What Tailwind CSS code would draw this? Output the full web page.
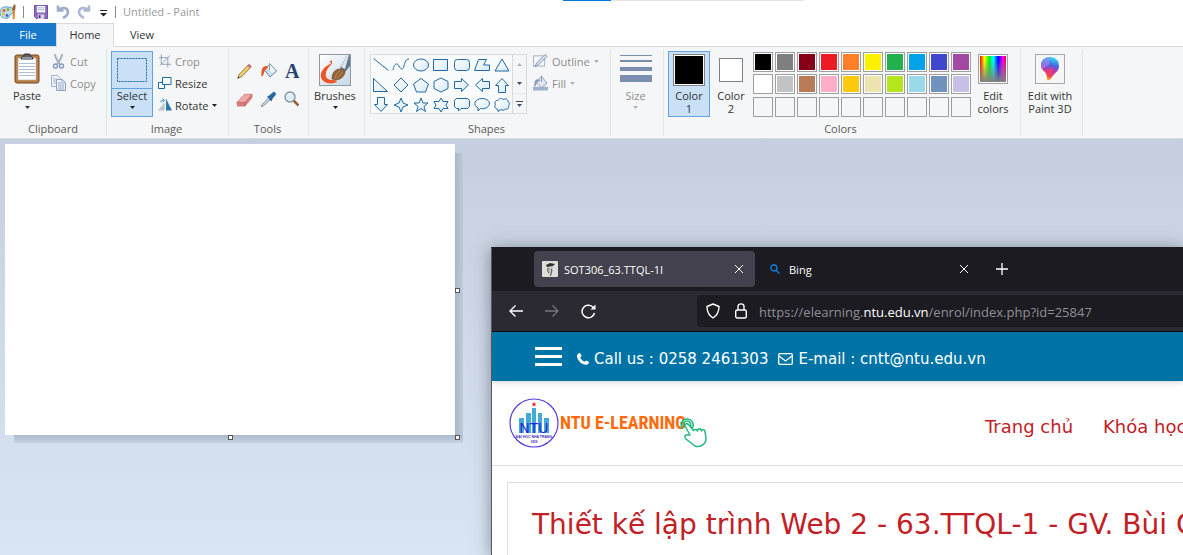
<!DOCTYPE html>
<html lang="en">
<head>
<meta charset="utf-8">
<title>Untitled - Paint</title>
<script src="https://cdn.jsdelivr.net/npm/@tailwindcss/browser@4"></script>
</head>
<body class="h-screen overflow-hidden flex flex-col bg-white font-['Open_Sans',sans-serif] text-[11px] leading-[13px] text-[#333]">

<svg class="absolute size-0">
  <defs>
    <linearGradient id="shade" x1="0" y1="0" x2="1" y2="1"><stop offset="0" stop-color="#fff"/><stop offset="1" stop-color="#d6eaf5"/></linearGradient>
    <linearGradient id="hue"><stop offset="0" stop-color="#f00"/><stop offset=".17" stop-color="#ff0"/><stop offset=".36" stop-color="#0e2"/><stop offset=".52" stop-color="#0ff"/><stop offset=".7" stop-color="#00f"/><stop offset=".88" stop-color="#f0f"/><stop offset="1" stop-color="#f02"/></linearGradient>
    <linearGradient id="fadeGray" x1="0" y1="0" x2="0" y2="1"><stop offset=".15" stop-color="#808080" stop-opacity="0"/><stop offset="1" stop-color="#808080"/></linearGradient>
    <linearGradient id="pin" x1=".6" y1="0" x2=".4" y2="1"><stop offset="0" stop-color="#2ce0f4"/><stop offset=".35" stop-color="#4b62e0"/><stop offset=".6" stop-color="#c336a8"/><stop offset=".8" stop-color="#f04848"/><stop offset="1" stop-color="#ffb81c"/></linearGradient>
    <linearGradient id="photo" x1="0" y1="0" x2="1" y2="1"><stop offset="0" stop-color="#fff"/><stop offset="1" stop-color="#c5d6e6"/></linearGradient>
  </defs>
</svg>

<!-- Title bar -->
<header class="h-[23px] shrink-0 flex items-center">
  <svg class="w-4 h-4" viewBox="0 0 16 16"><path d="M8 3C3 2-1 5 0 10c1 4 5 5 8 4 2-1 1-3 3-4s4-1 3-4c-1-2-3-3-6-3z" fill="#b9dcf0" stroke="#5d9cc4"/><circle cx="4" cy="6.500" r="1.500" fill="#ef5b2f"/><circle cx="8" cy="5.500" r="1.500" fill="#7cb82f"/><circle cx="3.500" cy="10" r="1.500" fill="#f5c22b"/><circle cx="7" cy="11.500" r="1.400" fill="#3a6fc4"/><path d="M12.500 6.500h2.500l-.3 8-1 1-1-1z" fill="#e8872d"/><path d="M12 6.500 13 2l2-2 .6 2-.4 4.500z" fill="#a2622d"/></svg>
  <span class="w-px h-3 bg-[#8a8a8a] ml-[7px]"></span>
  <button aria-label="Save" class="ml-[10px]"><svg class="w-[14px] h-[14px]" viewBox="0 0 15 15"><path d="M.5.5h14v14H2.500l-2-2z" fill="#8b6bb5" stroke="#65469a"/><path d="M3 1h9v7H3z" fill="#eef4fb"/><path d="M4 3h7M4 5h7" stroke="#a9bfd6"/><path d="M4 10h7v5H4z" fill="#d9cdea"/><path d="M5 11h2v3H5z" fill="#4b3182"/></svg></button>
  <button aria-label="Undo" class="ml-2"><svg class="w-[14px] h-[15px]" viewBox="0 0 14 15"><path d="M2 1.500v5h5.500M2.500 6C5 3 12 3 12 8c0 3-2 4.500-5 6" fill="none" stroke="#9aacca" stroke-width="2.600"/></svg></button>
  <button aria-label="Redo" class="ml-[7px]"><svg class="w-[14px] h-[15px] -scale-x-100" viewBox="0 0 14 15"><path d="M2 1.500v5h5.500M2.500 6C5 3 12 3 12 8c0 3-2 4.500-5 6" fill="none" stroke="#abbad2" stroke-width="2.600"/></svg></button>
  <button aria-label="Customize Quick Access Toolbar" class="ml-[9px] mt-1"><svg class="w-[7px] h-[7px]" viewBox="0 0 7 7"><path d="M0 .5h7" stroke="#222"/><path d="M0 3h7L3.500 6.500z" fill="#222"/></svg></button>
  <span class="w-px h-3 bg-[#8a8a8a] ml-2"></span>
  <h1 class="ml-[7px] text-[#9a9a9a]">Untitled - Paint</h1>
  <div class="ml-[363px] w-[241px] h-px self-start bg-[#e5e5e5]"><div class="w-12 h-px bg-[#0078d7]"></div></div>
</header>

<!-- Ribbon tabs -->
<nav class="h-[23px] shrink-0 flex relative z-10">
  <button class="w-14 bg-[#1979ca] text-white">File</button>
  <button class="w-[58px] h-6 pb-0.5 bg-[#f5f6f7] border border-b-0 border-[#dadbdc] text-[#333]">Home</button>
  <button class="w-14 text-[#333]">View</button>
</nav>

<!-- Ribbon -->
<section class="h-[93px] shrink-0 flex bg-[#f5f6f7] border-y border-[#dadbdc] py-0.5 overflow-hidden text-center">

  <div class="w-[107px] shrink-0 border-r border-[#e2e3e4] flex flex-col justify-between pb-px">
    <div class="flex pt-0.5">
      <button class="w-[42px] ml-1.5 flex flex-col items-center">
        <svg class="w-[26px] h-[34px]" viewBox="0 0 26 34"><rect x="1" y="4" width="24" height="28" rx="2" fill="#b98045" stroke="#74471c"/><path d="M4 7h18v22H4z" fill="#fff" stroke="#a5acb4" stroke-width=".6"/><path d="M5 12.500h16M5 15.500h16M5 18.500h16M5 21.500h16M5 24.500h16" stroke="#a9c0d8"/><path d="M7 8c0-3 3-2 3.500-5h5c.5 3 3.500 2 3.500 5z" fill="#555d66" stroke="#333"/><path d="M8 7h10" stroke="#d4dae0"/></svg>
        <span class="mt-1">Paste</span>
        <svg class="w-[5px] h-[3px] mt-1" viewBox="0 0 5 3"><path d="M0 0h5L2.500 3z" fill="#333"/></svg>
      </button>
      <div class="flex flex-col ml-[3px] -mt-px text-[#8d8d8d]">
        <button class="h-[22px] flex items-center gap-1"><svg class="w-[15px] h-4" viewBox="0 0 15 16" fill="none"><path d="M4 1c0 4 2 6 5 10M11 1c0 4-2 6-5 10" stroke="#a9b2c3" stroke-width="2"/><circle cx="4.500" cy="13" r="2" stroke="#8299bd" stroke-width="1.400"/><circle cx="10.500" cy="13" r="2" stroke="#8299bd" stroke-width="1.400"/></svg>Cut</button>
        <button class="h-[22px] flex items-center gap-1"><svg class="w-[15px] h-4" viewBox="0 0 15 16"><path d="M.5.500h6l3 3v8h-9z" fill="#eef2f8" stroke="#a3b2cb"/><path d="M2 4h4M2 6h5M2 8h5" stroke="#a9b8d0"/><path d="M5.500 4.500h6l3 3v8h-9z" fill="#eef2f8" stroke="#8ea1c0"/><path d="M11 4.500v3.500h3.500M7 8h3M7 10h6M7 12h6M7 14h6" stroke="#9aaeca" fill="none"/></svg>Copy</button>
      </div>
    </div>
    <span class="text-[#5a5a5a]">Clipboard</span>
  </div>

  <div class="w-[122px] shrink-0 border-r border-[#e2e3e4] flex flex-col justify-between pb-px">
    <div class="flex pt-0.5">
      <button class="w-[42px] h-[66px] ml-1 bg-[#c9e0f7] border border-[#62a2e4] flex flex-col items-center">
        <span class="w-full h-[37px] border-b border-[#62a2e4] flex items-center justify-center"><svg class="w-[30px] h-6" viewBox="0 0 30 24"><rect x=".5" y=".5" width="29" height="23" fill="none" stroke="#1b68a6" stroke-dasharray="2 1"/></svg></span>
        <span>Select</span>
        <svg class="w-[5px] h-[3px] mt-1" viewBox="0 0 5 3"><path d="M0 0h5L2.500 3z" fill="#222"/></svg>
      </button>
      <div class="flex flex-col ml-[5px] -mt-px">
        <button class="h-[22px] flex items-center gap-[3px] text-[#8d8d8d]"><svg class="w-[14px] h-[14px]" viewBox="0 0 15 14" fill="none" stroke="#8c9cb8"><path d="M3.500 0v10.500H14M1 3.500h9.500V14M2 12 13 1" /></svg>Crop</button>
        <button class="h-[22px] flex items-center gap-[3px]"><svg class="w-[14px] h-[14px]" viewBox="0 0 14 14"><path d="M.5 6.500h6v6h-6z" fill="#fff" stroke="#1b68a6"/><path d="M4.500 1.500h8.500v7H4.500z" fill="#fff" stroke="#1b68a6"/></svg>Resize</button>
        <button class="h-[22px] flex items-center gap-[3px]"><svg class="w-[14px] h-[14px]" viewBox="0 0 15 14"><path d="M7 4v9H0z" fill="#bcc5cf"/><path d="M8.500 0v13H15z" fill="#2c79ae"/><path d="M3 4c0-2 1-2 3-2M5 0l2 2-2 2" fill="none" stroke="#2382cf"/></svg>Rotate<svg class="w-[5px] h-[3px]" viewBox="0 0 5 3"><path d="M0 0h5L2.500 3z" fill="#222"/></svg></button>
      </div>
    </div>
    <span class="text-[#5a5a5a] pr-0.5">Image</span>
  </div>

  <div class="w-20 shrink-0 border-r border-[#e2e3e4] flex flex-col justify-between pb-px">
    <div class="grid grid-cols-3 gap-x-1.5 gap-y-[10px] px-[7px] pt-[13px]">
      <button aria-label="Pencil"><svg class="w-[17px] h-[17px]" viewBox="0 0 18 18"><path d="m2 16 1.500-4 9-9.500L15 5l-9 9.500z" fill="#f4d06c" stroke="#6b5838" stroke-width=".8"/><path d="m12.500 2.500 1.500-1.300L16.300 4 15 5z" fill="#e66b7d" stroke="#a34a52" stroke-width=".6"/><path d="m1.500 16.500.8-2 1.200 1.200z" fill="#222"/></svg></button>
      <button aria-label="Fill with color"><svg class="w-[18px] h-[18px]" viewBox="0 0 18 18"><path d="m4.500 8 5.500-6 6.500 7-6.500 6z" fill="#c8e0f1" stroke="#5e87aa"/><path d="m10 2.500 5.500 6.300-3 2.700-5-6z" fill="#eef7fc"/><path d="M9.500 1v7" stroke="#8f9da9"/><path d="M7 4C3 4 1 6 1.500 14.500 4 14 4 10 5 8l3-2.500z" fill="#ed5526"/></svg></button>
      <button aria-label="Text" class="font-['Liberation_Serif',serif] font-bold text-[20px] leading-[18px] text-[#24446f] h-[18px]">A</button>
      <button aria-label="Eraser"><svg class="w-[17px] h-[17px]" viewBox="0 0 18 18"><path d="m1 12 8-8.500h8l-7.500 9z" fill="#f4a8a8" stroke="#c56c6c" stroke-width=".7"/><path d="M1 12h8.500v4H1.500zM9.500 12 17 3.500V7l-7.500 9z" fill="#dc7c7c" stroke="#bd6464" stroke-width=".6"/></svg></button>
      <button aria-label="Color picker"><svg class="w-[17px] h-[17px]" viewBox="0 0 18 18"><path d="m1.500 16.500 1-2.500L9.500 7l1.500 2-7 6.500z" fill="#cfdfea" stroke="#5f7081" stroke-width=".8"/><path d="m8 6 2-1 4-3.500c1-1 3 1 2.500 2.200L13 8l-1 2.500z" fill="#2767ab" stroke="#164c88" stroke-width=".7"/></svg></button>
      <button aria-label="Magnifier"><svg class="w-[18px] h-[18px]" viewBox="0 0 18 18"><path d="m10.500 10.500 5 5" stroke="#9a6432" stroke-width="2.500"/><circle cx="7" cy="7" r="5" fill="#dcf0fb" stroke="#8b939c" stroke-width="1.400"/><path d="M5 6c.5-1.500 2-2 3-2" stroke="#fff" fill="none"/></svg></button>
    </div>
    <span class="text-[#5a5a5a] pr-0.5">Tools</span>
  </div>

  <div class="w-14 shrink-0 border-r border-[#e2e3e4]">
    <button class="w-full flex flex-col items-center pt-[5px] pr-[3px]">
      <svg class="w-8 h-8" viewBox="0 0 32 32"><rect x=".5" y=".5" width="31" height="31" fill="url(#photo)" stroke="#909aa4"/><path d="M11 10C5 13 1 18 2 23c1 6 10 8 16 5-1-2-3-2-5-2-5 0-7-3-6-7 .5-4 4-7 6-9.500C14 7 12 5 10.500 8l1 .5c1-1 1.500 0-.5 1.500z" fill="#ed5526"/><path d="m21 14 7-12 3-1v11l-5 6z" fill="#63758b"/><path d="m22 13 6-11 2-1-4 14z" fill="#dce5ed"/><path d="M13 25c0-6 3-10 8-10 5 0 6 3 4 6-2 4-7 6-12 4z" fill="#95633b" stroke="#69401f" stroke-width=".6"/><path d="M16 24c1-4 2-5 5-7M18 24c2-2 4-3 5-6" stroke="#bf8c57" fill="none"/></svg>
      <span class="mt-[3px]">Brushes</span>
      <svg class="w-[5px] h-[3px] mt-1" viewBox="0 0 5 3"><path d="M0 0h5L2.500 3z" fill="#222"/></svg>
    </button>
  </div>

  <div class="w-[246px] shrink-0 border-r border-[#e2e3e4] flex flex-col justify-between pb-px">
    <div class="flex pt-[5px] pl-[5px]">
      <div class="w-[157px] h-[60px] border border-[#d9dadb] bg-[#fafbfc] flex">
        <div class="grid grid-cols-7 w-[141px] [&_svg]:size-[18px] [&_svg]:m-px [&_svg]:fill-[url(#shade)] [&_svg]:stroke-[#1e69a5]">
          <button aria-label="Line"><svg viewBox="0 0 18 18"><path d="m1.500 2.500 15 12"/></svg></button>
          <button aria-label="Curve"><svg viewBox="0 0 18 18"><path style="fill:none" d="M1 14c1-6 4-8 6-4s4 4 5 0 2-7 5-7"/></svg></button>
          <button aria-label="Oval"><svg viewBox="0 0 18 18"><ellipse cx="9" cy="9" rx="7.500" ry="6"/></svg></button>
          <button aria-label="Rectangle"><svg viewBox="0 0 18 18"><path d="M1.500 3.500h14v11h-14z"/></svg></button>
          <button aria-label="Rounded rectangle"><svg viewBox="0 0 18 18"><rect x="1.500" y="3.500" width="15" height="11" rx="3"/></svg></button>
          <button aria-label="Polygon"><svg viewBox="0 0 18 18"><path d="M5.500 3.500h8l-3 5.500h6v5.500h-15z"/></svg></button>
          <button aria-label="Triangle"><svg viewBox="0 0 18 18"><path d="m9 3 7 12H2z"/></svg></button>
          <button aria-label="Right triangle"><svg viewBox="0 0 18 18"><path d="M1.500 2.500v13h14z"/></svg></button>
          <button aria-label="Diamond"><svg viewBox="0 0 18 18"><path d="m9 2 7 7-7 7-7-7z"/></svg></button>
          <button aria-label="Pentagon"><svg viewBox="0 0 18 18"><path d="m9 2.500 7.500 5.500-3 8h-9l-3-8z"/></svg></button>
          <button aria-label="Hexagon"><svg viewBox="0 0 18 18"><path d="m9 2 7 3.500v7L9 16l-7-3.500v-7z"/></svg></button>
          <button aria-label="Right arrow"><svg viewBox="0 0 18 18"><path d="M1.500 5.500h7v-3L15.500 9l-7 6.500v-3h-7z"/></svg></button>
          <button aria-label="Left arrow"><svg viewBox="0 0 18 18"><path d="M16.500 5.500h-7v-3L2.500 9l7 6.500v-3h7z"/></svg></button>
          <button aria-label="Up arrow"><svg viewBox="0 0 18 18"><path d="M5.500 16.500v-7h-3L9 2.500l6.500 7h-3v7z"/></svg></button>
          <button aria-label="Down arrow"><svg viewBox="0 0 18 18"><path d="M5.500 1.500v7h-3L9 15.500l6.500-7h-3v-7z"/></svg></button>
          <button aria-label="Four-point star"><svg viewBox="0 0 18 18"><path d="m9 2 2 5 5 2-5 2-2 5-2-5-5-2 5-2z"/></svg></button>
          <button aria-label="Five-point star"><svg viewBox="0 0 18 18"><path d="m9 2 2 5h5l-4 3.500 1.500 5L9 12.500l-4.500 3 1.500-5L2 7h5z"/></svg></button>
          <button aria-label="Six-point star"><svg viewBox="0 0 18 18"><path d="m9 2 2 3.500h5L14 9l2 3.500h-5L9 16l-2-3.500H2L4 9 2 5.500h5z"/></svg></button>
          <button aria-label="Rounded callout"><svg viewBox="0 0 18 18"><path d="M3.500 2.500h11l2 2v6l-2 2H8L5.500 15v-2.500h-2l-2-2v-6z"/></svg></button>
          <button aria-label="Oval callout"><svg viewBox="0 0 18 18"><path d="M5 12C-1 9 2 2.500 9 2.500S19 8 14 11.500c-2 1.500-5 1.300-6.500 1L5 15z"/></svg></button>
          <button aria-label="Cloud callout"><svg viewBox="0 0 18 18"><path d="M4.500 13C2 13 1 10 2.500 9 1 6 3 4 5 4.500 6 2 9 2 10 3.500c3-1.500 5 0 5 2 2 1 2 3 .5 4 1 3-1 4-3 3.500-2 2-3 1-4.500.500L5 15.500z"/></svg></button>
        </div>
        <div class="flex flex-col flex-1 border-l border-[#d9dadb] bg-[#f5f6f7]">
          <button aria-label="Scroll shapes up" class="flex-1 flex items-center justify-center"><svg class="w-[5px] h-[3px]" viewBox="0 0 5 3"><path d="M0 3h5L2.500 0z" fill="#b0b4ba"/></svg></button>
          <button aria-label="Scroll shapes down" class="flex-1 flex items-center justify-center"><svg class="w-[5px] h-[3px]" viewBox="0 0 5 3"><path d="M0 0h5L2.500 3z" fill="#3c4a66"/></svg></button>
          <button aria-label="More shapes" class="flex-1 flex items-center justify-center border-t border-[#e7e8e9]"><svg class="w-[7px] h-[6px]" viewBox="0 0 7 6"><path d="M0 .5h7" stroke="#3c4a66"/><path d="M1 3h5L3.500 6z" fill="#3c4a66"/></svg></button>
        </div>
      </div>
      <div class="flex flex-col ml-1.5 -mt-1 text-[#8d8d8d]">
        <button class="h-[22px] flex items-center gap-1"><svg class="w-[15px] h-4" viewBox="0 0 16 16"><path d="M.5 2.500h12v11H.5z" fill="#f4f7fa" stroke="#a3adbf"/><path d="m2 14 2-4 9-9 2 2-9 9z" fill="#d8dfec" stroke="#8392b0"/></svg>Outline<svg class="w-[5px] h-[3px]" viewBox="0 0 5 3"><path d="M0 0h5L2.500 3z" fill="#aeb0b4"/></svg></button>
        <button class="h-[22px] flex items-center gap-1"><svg class="w-[15px] h-4" viewBox="0 0 16 16"><path d="M0 12h16v4H0z" fill="#a1b0cc"/><path d="m3 7 6-6 6 7-6 5z" fill="#dfe6f1" stroke="#8c9dbb"/><path d="M5 4C2 4 1 7 1.500 12 4 11 3.500 8 5 7l3-2z" fill="#8b9cbc"/><path d="M9 0v7" stroke="#8c9dbb"/></svg>Fill<svg class="w-[5px] h-[3px]" viewBox="0 0 5 3"><path d="M0 0h5L2.500 3z" fill="#aeb0b4"/></svg></button>
      </div>
    </div>
    <span class="text-[#5a5a5a] pr-0.5">Shapes</span>
  </div>

  <div class="w-[53px] shrink-0 border-r border-[#e2e3e4]">
    <button class="w-full flex flex-col items-center pt-[5px] pr-[3px] text-[#8d8d8d]">
      <svg class="w-8 h-[31px]" viewBox="0 0 32 31" fill="#7b8eb0"><path d="M0 1h32v1H0zM0 6h32v2H0zM0 13h32v4H0zM0 21h32v7H0z"/></svg>
      <span class="mt-1">Size</span>
      <svg class="w-[5px] h-[3px] mt-1" viewBox="0 0 5 3"><path d="M0 0h5L2.500 3z" fill="#aeb0b4"/></svg>
    </button>
  </div>

  <div class="w-[357px] shrink-0 border-r border-[#e2e3e4] flex flex-col justify-between pb-px">
    <div class="flex pt-0.5">
      <button class="w-[42px] h-[66px] ml-1 bg-[#c9e0f7] border border-[#62a2e4] flex flex-col items-center pt-0.5">
        <span class="size-8 border border-[#808080] bg-white p-px"><span class="block size-full bg-black"></span></span>
        <span class="mt-[3px]">Color<br>1</span>
      </button>
      <button class="w-[42px] h-[66px] flex flex-col items-center pt-[7px]">
        <span class="size-6 border border-[#808080] bg-white"></span>
        <span class="mt-[7px]">Color<br>2</span>
      </button>
      <div class="grid grid-cols-10 gap-0.5 ml-px mt-px [&>button]:size-5 [&>button]:border [&>button]:border-[#a0a0a0] [&>button]:p-px [&_span]:block [&_span]:size-full">
        <button aria-label="Black" class="bg-white"><span class="bg-black"></span></button>
        <button aria-label="Gray" class="bg-white"><span class="bg-[#7f7f7f]"></span></button>
        <button aria-label="Dark red" class="bg-white"><span class="bg-[#880015]"></span></button>
        <button aria-label="Red" class="bg-white"><span class="bg-[#ed1c24]"></span></button>
        <button aria-label="Orange" class="bg-white"><span class="bg-[#ff7f27]"></span></button>
        <button aria-label="Yellow" class="bg-white"><span class="bg-[#fff200]"></span></button>
        <button aria-label="Green" class="bg-white"><span class="bg-[#22b14c]"></span></button>
        <button aria-label="Turquoise" class="bg-white"><span class="bg-[#00a2e8]"></span></button>
        <button aria-label="Indigo" class="bg-white"><span class="bg-[#3f48cc]"></span></button>
        <button aria-label="Purple" class="bg-white"><span class="bg-[#a349a4]"></span></button>
        <button aria-label="White" class="bg-white"><span class="bg-white"></span></button>
        <button aria-label="Light gray" class="bg-white"><span class="bg-[#c3c3c3]"></span></button>
        <button aria-label="Brown" class="bg-white"><span class="bg-[#b97a57]"></span></button>
        <button aria-label="Rose" class="bg-white"><span class="bg-[#ffaec9]"></span></button>
        <button aria-label="Gold" class="bg-white"><span class="bg-[#ffc90e]"></span></button>
        <button aria-label="Light yellow" class="bg-white"><span class="bg-[#efe4b0]"></span></button>
        <button aria-label="Lime" class="bg-white"><span class="bg-[#b5e61d]"></span></button>
        <button aria-label="Light turquoise" class="bg-white"><span class="bg-[#99d9ea]"></span></button>
        <button aria-label="Blue-gray" class="bg-white"><span class="bg-[#7092be]"></span></button>
        <button aria-label="Lavender" class="bg-white"><span class="bg-[#c8bfe7]"></span></button>
        <button aria-label="Custom color 1"></button>
        <button aria-label="Custom color 2"></button>
        <button aria-label="Custom color 3"></button>
        <button aria-label="Custom color 4"></button>
        <button aria-label="Custom color 5"></button>
        <button aria-label="Custom color 6"></button>
        <button aria-label="Custom color 7"></button>
        <button aria-label="Custom color 8"></button>
        <button aria-label="Custom color 9"></button>
        <button aria-label="Custom color 10"></button>
      </div>
      <button class="w-[42px] h-[66px] ml-px flex flex-col items-center pt-[3px]">
        <svg class="w-[30px] h-[31px]" viewBox="0 0 30 31"><rect x=".5" y=".5" width="29" height="29" fill="#fff" stroke="#a0a0a0"/><path d="M2 2h26v26H2z" fill="url(#hue)"/><path d="M2 2h26v26H2z" fill="url(#fadeGray)"/></svg>
        <span class="mt-1">Edit<br>colors</span>
      </button>
    </div>
    <span class="text-[#5a5a5a] pr-[3px]">Colors</span>
  </div>

  <div class="w-[62px] shrink-0 border-r border-[#e2e3e4]">
    <button class="w-full flex flex-col items-center pt-[5px] pr-[3px]">
      <svg class="w-[30px] h-[31px]" viewBox="0 0 30 31"><rect x=".5" y=".5" width="29" height="29" fill="#f6f6f6" stroke="#a9a9a9"/><path d="M15 3c6 0 9 4 9 9 0 6-5 7-7 11-1 2-3 4-5 3 0-3 0-5-2-8-2-2-4-3-4-7 0-5 4-8 9-8z" fill="url(#pin)"/><path d="M7 8c2-4 5-5 8-5l-1 8-7 4c-1-2-1-5 0-7z" fill="#a98bf0" fill-opacity=".6"/><path d="M9 17c3-3 7-1 9-4 1 3-1 7-4 11-1-3-3-5-5-7z" fill="#ec3d6b" fill-opacity=".8"/></svg>
      <span class="mt-1">Edit with<br>Paint 3D</span>
    </button>
  </div>
</section>

<!-- Drawing area -->
<main class="flex-1 min-h-0 relative overflow-hidden bg-linear-to-b from-[#c5cfdf] to-[#dae5f3]">
  <div class="absolute left-[14px] top-[296px] w-[449px] h-2 bg-linear-to-b from-[#aab9cd] to-[#c5d2e2]"></div>
  <div class="absolute left-[455px] top-[14px] w-2 h-[282px] bg-linear-to-r from-[#a9b6ca] to-[#bfcbdc]"></div>
  <div class="absolute left-[5px] top-[5px] w-[450px] h-[291px] bg-white"></div>
  <span class="absolute left-[455px] top-[149px] size-[5px] border border-[#555] bg-white"></span>
  <span class="absolute left-[455px] top-[296px] size-[5px] border border-[#555] bg-white"></span>
  <span class="absolute left-[228px] top-[296px] size-[5px] border border-[#555] bg-white"></span>

  <!-- Browser window -->
  <div class="absolute left-[491px] top-[108px] right-0 bottom-0 border-l border-t border-l-[#55595f] border-t-[#1c1b22] bg-white shadow-[0_2px_16px_rgba(40,50,65,0.5)] flex flex-col">
    <div class="h-[43px] shrink-0 bg-[#1c1b22] flex pt-[3px] pl-[42px] text-white">
      <div class="w-[221px] h-9 rounded bg-[#42414d] flex items-center px-2">
        <svg class="size-4" viewBox="0 0 16 16"><rect width="16" height="16" rx="1" fill="#deded9"/><path d="m4 4 4-2 5 1-2 2-6 1z" fill="#333"/><path d="M5 6c0 5 1 6 4 9l2-9" fill="#c4c4bf"/><path d="M6 7v4l1 1M9 8l1 1-1.500 6" stroke="#555" fill="none"/></svg>
        <span class="ml-1.5">SOT306_63.TTQL-1I</span>
        <button aria-label="Close tab" class="ml-auto mr-1"><svg class="size-2" viewBox="0 0 8 8"><path d="m0 0 8 8M8 0 0 8" stroke="#fff"/></svg></button>
      </div>
      <div class="w-[221px] h-9 ml-1 flex items-center pl-[11px] pr-3">
        <svg class="size-[10px]" viewBox="0 0 9 9" fill="none" stroke="#1275c9" stroke-width="1.400"><circle cx="3.500" cy="3.500" r="2.700"/><path d="m5.500 5.500 3 3"/></svg>
        <span class="ml-[9px]">Bing</span>
        <button aria-label="Close tab" class="ml-auto"><svg class="size-2" viewBox="0 0 8 8"><path d="m0 0 8 8M8 0 0 8" stroke="#fff"/></svg></button>
      </div>
      <button aria-label="New tab" class="ml-4 h-9"><svg class="size-3" viewBox="0 0 12 12"><path d="M6 0v12M0 6h12" stroke="#fff" stroke-width="1.300"/></svg></button>
    </div>
    <div class="h-[41px] shrink-0 bg-[#2b2a33] border-b border-[#0c0c0d] flex items-center pl-[17px]">
      <button aria-label="Back"><svg class="size-[14px]" viewBox="0 0 14 14" fill="none" stroke="#fff" stroke-width="1.400"><path d="M14 7H1M6.500 1.500 1 7l5.500 5.500"/></svg></button>
      <button aria-label="Forward" class="ml-[22px]"><svg class="size-[14px]" viewBox="0 0 14 14" fill="none" stroke="#76757d" stroke-width="1.300"><path d="M0 7h13M7.500 1.500 13 7l-5.500 5.500"/></svg></button>
      <button aria-label="Reload" class="ml-[22px]"><svg class="size-[15px]" viewBox="0 0 15 15" fill="none" stroke="#fff" stroke-width="1.500"><path d="M13.500 9A6.300 6.300 0 1 1 11.500 2.700L13 4"/><path d="M14.500.500v5h-5z" fill="#fff" stroke="none"/></svg></button>
      <div class="ml-[101px] flex-1 h-8 rounded-l bg-[#1c1b22] flex items-center pl-[9px]">
        <svg class="w-[14px] h-4" viewBox="0 0 14 16" fill="none" stroke="#fff" stroke-width="1.400"><path d="m7 1 6 2.500c0 6-2 9-6 11.500C3 12.500 1 9.500 1 3.500z" stroke-linejoin="round"/></svg>
        <svg class="w-3 h-4 ml-[15px]" viewBox="0 0 12 16" fill="none" stroke="#fff" stroke-width="1.400"><rect x=".7" y="7" width="10.600" height="8" rx="1.500"/><path d="M3 7V3.500C3 0 9 0 9 3.500V7"/></svg>
        <p class="ml-3 pt-px text-[13px] leading-5 text-[#8f8f96] whitespace-nowrap">https://elearning.<span class="text-white">ntu.edu.vn</span>/enrol/index.php?id=25847</p>
      </div>
    </div>

    <div class="font-['DejaVu_Sans',sans-serif] flex-1 min-h-0 overflow-hidden">
      <div class="h-[49px] bg-[#0073a6] flex items-center pl-[43px] pt-1 text-white text-[15px] leading-5 whitespace-nowrap relative shadow-[0_2px_5px_rgba(0,0,0,0.15)]">
        <button aria-label="Menu" class="mb-1"><svg class="w-[27px] h-[19px]" viewBox="0 0 27 19" fill="#fff"><path d="M0 0h27v3H0zM0 8h27v3H0zM0 16h27v3H0z"/></svg></button>
        <svg class="size-3 ml-[15px]" viewBox="0 0 12 12" fill="#fff"><path d="m0 2 2-2 1.300.2L4.600 3 3.200 4.500c.8 1.800 2.400 3.400 4.300 4.300L9 7.400l2.800 1.400.2 1.300-2 1.700C5 12.500-.5 7 0 2z"/></svg>
        <span class="ml-[5px]">Call us : 0258 2461303</span>
        <svg class="w-[15px] h-3 ml-[10px]" viewBox="0 0 15 12" fill="none" stroke="#fff" stroke-width="1.300"><rect x=".7" y=".7" width="13.600" height="10.600" rx="1"/><path d="m1 3 6.500 5L14 3"/></svg>
        <span class="ml-[5px]">E-mail : cntt@ntu.edu.vn</span>
      </div>
      <div class="h-[85px] border-b border-[#dfdfdf] flex items-center pl-[17px] whitespace-nowrap">
        <svg class="size-[50px]" viewBox="0 0 50 50"><circle cx="25" cy="25" r="24" fill="#fff" stroke="#5a3ade" stroke-width="1.200"/><path d="M10 20h5v15h-5zM17 15h5v20h-5zM23 10h4v25h-4zM29 15h4v20h-4zM35 20h5v15h-5z" fill="#43abd8"/><path d="m25 4 .7 1.600h1.700l-1.300 1.100.5 1.700-1.600-1-1.600 1 .5-1.700-1.300-1.100h1.700z" fill="#e02424"/><text x="25" y="35" text-anchor="middle" font-family="Liberation Sans" font-size="14" fill="#2a1edb">NTU</text><text x="25" y="40" text-anchor="middle" font-family="Liberation Sans" font-weight="bold" font-size="3.500" fill="#3a2abf">ĐẠI HỌC NHA TRANG</text><text x="25" y="45" text-anchor="middle" font-family="Liberation Sans" font-weight="bold" font-size="3" fill="#3a2abf">1959</text></svg>
        <span class="ml-px font-['Roboto_Condensed','Roboto',sans-serif] font-bold text-[18px] leading-5 text-[#ff6a0a]">NTU E-LEARNING</span>
        <svg class="w-7 h-8 -ml-1.5 mt-5" viewBox="0 0 28 32" fill="none" stroke="#20b97c" stroke-width="1.500" stroke-linejoin="round"><path d="M2.500 12C-1 6 3 2 7 2s8 4 5.500 9M4.500 10C2 6 5 4 7 4s5 2 3.500 6"/><path d="M6 7c-1 0-2 1-1 2l5 9H6c-2 1-1 3 0 4l9 7c5 2 11-2 11-7l-1-8c-1-2-3-2-3.500 0-.5-3-3.500-3-4 0-.5-2-3-2-4-.500L9 8C8 7 7 6 6 7z" fill="#fff"/></svg>
        <nav class="ml-auto flex gap-[30px] w-[198px] text-[18px] leading-5 text-[#c22026] mt-2">
          <a href="#">Trang chủ</a>
          <a href="#">Khóa học</a>
        </nav>
      </div>
      <div class="mt-4 ml-[15px] h-48 border-l border-t border-[#dfdfdf] pl-6 pt-6">
        <h2 class="text-[28px] leading-9 text-[#c22026] whitespace-nowrap">Thiết kế lập trình Web 2 - 63.TTQL-1 - GV. Bùi C</h2>
      </div>
    </div>
  </div>
</main>
</body>
</html>
